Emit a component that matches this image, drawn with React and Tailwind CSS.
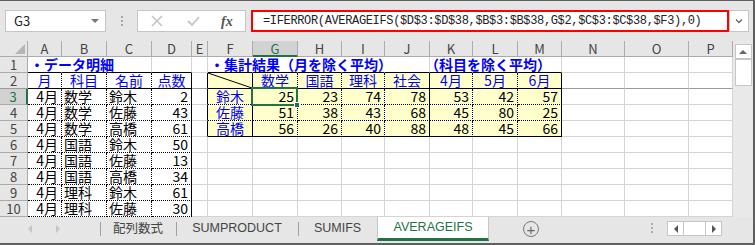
import React from 'react'

const JP = "font-['Noto_Sans_CJK_JP',sans-serif]"

const COLS = [
  { k: 'A', w: 'w-[34px]' },
  { k: 'B', w: 'w-[45px]' },
  { k: 'C', w: 'w-[45px]' },
  { k: 'D', w: 'w-[40px]' },
  { k: 'E', w: 'w-[16px]' },
  { k: 'F', w: 'w-[45px]' },
  { k: 'G', w: 'w-[45px]' },
  { k: 'H', w: 'w-[44px]' },
  { k: 'I', w: 'w-[43px]' },
  { k: 'J', w: 'w-[45px]' },
  { k: 'K', w: 'w-[43px]' },
  { k: 'L', w: 'w-[45px]' },
  { k: 'M', w: 'w-[44px]' },
  { k: 'N', w: 'w-[63px]' },
  { k: 'O', w: 'w-[64px]' },
  { k: 'P', w: 'w-[44px]' },
]

const DETAIL = [
  ['4月', '数学', '鈴木', 2],
  ['4月', '数学', '佐藤', 43],
  ['4月', '数学', '高橋', 61],
  ['4月', '国語', '鈴木', 50],
  ['4月', '国語', '佐藤', 13],
  ['4月', '国語', '高橋', 34],
  ['4月', '理科', '鈴木', 61],
  ['4月', '理科', '佐藤', 30],
]

const HEADS = ['数学', '国語', '理科', '社会', '4月', '5月', '6月']
const SUMMARY = [
  ['鈴木', 25, 23, 74, 78, 53, 42, 57],
  ['佐藤', 51, 38, 43, 68, 45, 80, 25],
  ['高橋', 56, 26, 40, 88, 48, 45, 66],
]

const RB = {
  grid: 'border-r-[#d4d4d4]',
  none: 'border-r-transparent',
  solid: 'border-r-black',
  dot: 'border-r-black [border-right-style:dotted]',
}
const BB = {
  grid: 'border-b-[#d4d4d4]',
  solid: 'border-b-black',
  dot: 'border-b-black [border-bottom-style:dotted]',
  freeze: 'border-b-[#9b9b9b]',
}
const ALIGN = {
  left: 'justify-start pl-[2px]',
  right: 'justify-end pr-[3px]',
  center: 'justify-center',
}

// right edges of the summary block F..M
const SUM_RIGHT = ['solid', 'dot', 'dot', 'dot', 'solid', 'dot', 'dot', 'solid']

function cellSpec(r, c) {
  const s = { text: '', align: 'left', rb: 'grid', bb: 'grid', bg: '', color: 'text-black' }
  if (r === 1) {
    if (c <= 3 || (c >= 5 && c <= 12)) s.bb = 'solid'
    if ([0, 1, 5, 6, 7, 8, 10, 11].includes(c)) s.rb = 'none'
    if (c === 0) s.title = '・データ明細'
    if (c === 5) s.title = '・集計結果（月を除く平均）'
    if (c === 10) {
      s.title = '（科目を除く平均）'
      s.shift = true
    }
    return s
  }
  if (r === 2) s.bb = 'freeze'
  if (c <= 3) {
    s.rb = c === 3 ? 'solid' : 'dot'
    if (r === 2) {
      s.bb = 'solid'
      s.text = ['月', '科目', '名前', '点数'][c]
      s.align = 'center'
      s.color = 'text-[#0000ff]'
    } else {
      s.bb = 'dot'
      s.text = String(DETAIL[r - 3][c])
      s.align = c === 0 || c === 3 ? 'right' : 'left'
    }
  }
  if (c === 4 && r <= 5) s.rb = 'solid'
  if (c >= 5 && c <= 12 && r <= 5) {
    s.bg = 'bg-[#ffffcc]'
    s.rb = SUM_RIGHT[c - 5]
    s.bb = r === 2 || r === 5 ? 'solid' : 'dot'
    if (r === 2) {
      if (c === 5) s.diag = true
      else {
        s.text = HEADS[c - 6]
        s.align = 'center'
        s.color = 'text-[#0000ff]'
      }
    } else {
      s.text = String(SUMMARY[r - 3][c - 5])
      if (c === 5) {
        s.align = 'center'
        s.color = 'text-[#0000ff]'
      } else s.align = 'right'
    }
  }
  if (r === 3 && c === 6) s.sel = true
  return s
}

const Cell = ({ r, c }) => {
  const s = cellSpec(r, c)
  return (
    <div className={`relative flex h-4 shrink-0 items-center whitespace-nowrap border-r border-b leading-[15px] ${COLS[c].w} ${RB[s.rb]} ${BB[s.bb]} ${s.bg} ${ALIGN[s.align]} ${s.color}`}>
      {s.title && (
        <span className={`absolute top-0 z-10 text-[14px] font-bold leading-[15px] text-[#0000ff] ${s.shift ? '-left-[5px]' : 'left-[2px]'}`}>
          {s.title}
        </span>
      )}
      {s.text}
      {s.diag && (
        <svg className="absolute inset-0" width="44" height="15">
          <line x1="0" y1="0" x2="44" y2="15" stroke="#000" strokeWidth="1" />
        </svg>
      )}
      {s.sel && (
        <div className="absolute -left-[2px] -top-[2px] -right-px -bottom-[2px] z-20 border-2 border-[#217346]">
          <div className="absolute -right-[4px] -bottom-[4px] h-[6px] w-[6px] border border-white bg-[#217346]" />
        </div>
      )}
    </div>
  )
}

const ColHeader = () => (
  <div className={`flex h-4 ${JP} text-[13px] leading-[15px]`}>
    <div className="relative h-4 w-[28px] shrink-0 border-r border-b border-[#ababab] bg-[#e6e6e6]">
      <div className="absolute right-[2px] bottom-[2px] h-0 w-0 border-b-[10px] border-l-[10px] border-b-[#b5b5b5] border-l-transparent" />
    </div>
    {COLS.map((col) =>
      col.k === 'G' ? (
        <div key={col.k} className={`flex h-4 shrink-0 items-center justify-center border-r border-r-[#ababab] border-b-2 border-b-[#217346] bg-[#d2d2d2] text-[#217346] ${col.w}`}>
          {col.k}
        </div>
      ) : (
        <div key={col.k} className={`flex h-4 shrink-0 items-center justify-center border-r border-b border-[#ababab] bg-[#e6e6e6] text-[#444] ${col.w}`}>
          {col.k}
        </div>
      )
    )}
  </div>
)

const RowHeader = ({ r }) =>
  r === 3 ? (
    <div className="flex h-4 w-[28px] shrink-0 items-center justify-center border-r-2 border-r-[#217346] border-b border-b-[#ababab] bg-[#d2d2d2] text-[13px] text-[#217346]">
      {r}
    </div>
  ) : (
    <div className={`flex h-4 w-[28px] shrink-0 items-center justify-center border-r border-r-[#ababab] border-b bg-[#e6e6e6] text-[13px] text-[#444] ${r === 2 ? 'border-b-[#9b9b9b]' : 'border-b-[#ababab]'}`}>
      {r}
    </div>
  )

const FormulaBar = () => (
  <div className="flex h-[40px] items-start bg-[#e6e6e6] pt-[9px]">
    <div className={`ml-[5px] flex h-[22px] w-[101px] items-center justify-between border border-[#c6c6c6] bg-white pl-[8px] pr-[6px] ${JP} text-[13px] text-[#222]`}>
      <span>G3</span>
      <span className="h-0 w-0 border-x-[4px] border-t-[4px] border-x-transparent border-t-[#777]" />
    </div>
    <div className="ml-[15px] mt-[6px] flex flex-col gap-[2px]">
      <span className="h-[2px] w-[2px] bg-[#a8a8a8]" />
      <span className="h-[2px] w-[2px] bg-[#a8a8a8]" />
      <span className="h-[2px] w-[2px] bg-[#a8a8a8]" />
    </div>
    <div className="ml-[14px] flex h-[22px] w-[109px] items-center border border-[#c6c6c6] bg-white">
      <svg className="ml-[13px]" width="12" height="12" viewBox="0 0 12 12">
        <path d="M1 1 L11 11 M11 1 L1 11" stroke="#c4c4c4" strokeWidth="1.6" fill="none" />
      </svg>
      <svg className="ml-[24px]" width="13" height="12" viewBox="0 0 13 12">
        <path d="M1 6 L5 10 L12 2" stroke="#c4c4c4" strokeWidth="1.8" fill="none" />
      </svg>
      <span className="ml-[21px] font-['Liberation_Serif',serif] text-[14px] font-bold italic text-[#555]">fx</span>
    </div>
    <div className="ml-[5px] flex h-[22px] w-[478px] items-center border-2 border-[#ff0000] bg-white pl-[10px] font-['Liberation_Mono',monospace] text-[12px] tracking-[-0.35px] text-[#222]">
      =IFERROR(AVERAGEIFS($D$3:$D$38,$B$3:$B$38,G$2,$C$3:$C$38,$F3),0)
    </div>
    <div className="flex h-[22px] w-[20px] items-center justify-center border border-[#c6c6c6] bg-white">
      <svg width="8" height="6" viewBox="0 0 8 6">
        <path d="M1 1.5 L4 4.5 L7 1.5" stroke="#666" strokeWidth="1.3" fill="none" />
      </svg>
    </div>
  </div>
)

const VScroll = () => (
  <div className="flex w-[20px] flex-col items-center bg-[#e9e9e9] pt-[3px]">
    <div className="flex h-[15px] w-[17px] items-center justify-center border border-[#c6c6c6] bg-white">
      <span className="h-0 w-0 border-x-[4px] border-b-[4px] border-x-transparent border-b-[#666]" />
    </div>
    <div className="h-[27px] w-[17px] border border-[#c6c6c6] bg-white" />
  </div>
)

const Tab = ({ label, w, sep = true }) => (
  <div className={`relative flex h-[23px] shrink-0 items-center justify-center ${w}`}>
    {sep && <span className="absolute left-0 top-[5px] h-[14px] w-px bg-[#a0a0a0]" />}
    {label}
  </div>
)

const TabBar = () => (
  <div className="flex h-[26px] items-start bg-[#e6e6e6] font-['Liberation_Sans',sans-serif] text-[12.5px] text-[#444]">
    <div className="flex h-[23px] w-[100px] shrink-0 items-center">
      <span className="ml-[28px] h-0 w-0 border-y-[4px] border-r-[4px] border-y-transparent border-r-[#c4c4c4]" />
      <span className="ml-[24px] h-0 w-0 border-y-[4px] border-l-[4px] border-y-transparent border-l-[#c4c4c4]" />
    </div>
    <Tab label={<span className={JP}>配列数式</span>} w="w-[76px]" />
    <Tab label="SUMPRODUCT" w="w-[122px]" />
    <Tab label="SUMIFS" w="w-[79px]" />
    <div className="flex h-[24px] w-[112px] shrink-0 items-center justify-center border-x border-[#c6c6c6] border-b-[3px] border-b-[#217346] bg-white text-[#217346]">
      AVERAGEIFS
    </div>
    <div className="ml-[34px] mt-[4px] flex h-[16px] w-[16px] items-center justify-center rounded-full border border-[#777] text-[15px] leading-none text-[#666]">
      +
    </div>
    <div className="ml-[112px] mt-[6px] flex flex-col gap-[2px]">
      <span className="h-[2px] w-[2px] bg-[#b0b0b0]" />
      <span className="h-[2px] w-[2px] bg-[#b0b0b0]" />
      <span className="h-[2px] w-[2px] bg-[#b0b0b0]" />
    </div>
    <div className="ml-[14px] mt-[4px] flex h-[15px]">
      <div className="flex w-[17px] items-center justify-center border border-[#c6c6c6] bg-white">
        <span className="h-0 w-0 border-y-[4px] border-r-[4px] border-y-transparent border-r-[#555]" />
      </div>
      <div className="w-[21px] border-y border-[#c6c6c6] bg-white" />
      <div className="flex w-[17px] items-center justify-center border border-[#c6c6c6] bg-white">
        <span className="h-0 w-0 border-y-[4px] border-l-[4px] border-y-transparent border-l-[#555]" />
      </div>
    </div>
  </div>
)

export default function App() {
  const rows = [1, 2, 3, 4, 5, 6, 7, 8, 9, 10]
  return (
    <div className="h-[245px] w-[755px] overflow-hidden border-t border-r-2 border-b-2 border-[#5f5f5f] bg-white">
      <FormulaBar />
      <div className="flex h-[176px]">
        <div className="w-[733px] shrink-0">
          <ColHeader />
          {rows.map((r) => (
            <div key={r} className={`flex h-4 ${JP} text-[14px]`}>
              <RowHeader r={r} />
              {COLS.map((col, c) => (
                <Cell key={col.k} r={r} c={c} />
              ))}
            </div>
          ))}
        </div>
        <VScroll />
      </div>
      <TabBar />
    </div>
  )
}
